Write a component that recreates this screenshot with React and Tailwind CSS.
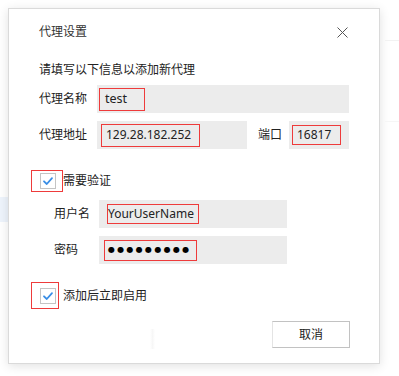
import React from "react";

const font = { fontFamily: '"Noto Sans", "Noto Sans CJK SC", sans-serif' };

// Checkbox with the red annotation frame around it
const CheckRow = ({ label, frameW, frameH, top, gap }) => (
  <div className={`flex items-center pl-[22px] ${top}`}>
    <div className={`flex items-center border border-[#ee3b3b] pl-[8px] ${frameW} ${frameH}`}>
      <div className="flex h-[16px] w-[16px] items-center justify-center border border-[#c4c4c4] bg-white">
        <svg width="12" height="12" viewBox="0 0 12 12" fill="none">
          <path d="M2 6.3 L4.8 9 L10 3.2" stroke="#3a8ee6" strokeWidth="1.8" strokeLinecap="round" strokeLinejoin="round" />
        </svg>
      </div>
    </div>
    <span className={`text-[12px] leading-none text-[#222] ${gap}`}>{label}</span>
  </div>
);

export default function App() {
  return (
    <div className="flex h-[376px] w-[399px] overflow-hidden bg-white" style={font}>
      {/* page behind the dialog, left edge */}
      <div className="flex w-[8px] flex-col overflow-hidden">
        <div className="mt-[197px] h-[25px] w-full bg-[#eef4fc]" />
      </div>

      <div className="pt-[8px]">
        <div className="flex h-[356px] w-[372px] flex-col border border-[#dadada] bg-white shadow-[0_2px_10px_rgba(0,0,0,0.12)]">
          {/* title */}
          <div className="mt-[11px] flex h-[24px] items-center justify-between pl-[30px] pr-[31px]">
            <span className="text-[12px] text-[#333]">代理设置</span>
            <svg width="11" height="11" viewBox="0 0 11 11">
              <path d="M0.5 0.5 L10.5 10.5 M10.5 0.5 L0.5 10.5" stroke="#555" strokeWidth="1" />
            </svg>
          </div>

          <div className="mt-[18px] flex h-[16px] items-center pl-[30px] text-[12px] text-[#222]">
            请填写以下信息以添加新代理
          </div>

          {/* name */}
          <div className="mt-[7px] flex h-[28px] items-center pl-[30px]">
            <span className="w-[58px] text-[12px] text-[#222]">代理名称</span>
            <div className="flex h-[28px] w-[252px] items-center bg-[#ececec] pl-[2px]">
              <div className="flex h-[23px] w-[46px] items-center border border-[#ee3b3b] pl-[5px] text-[12.5px] text-[#222]">
                test
              </div>
            </div>
          </div>

          {/* address + port */}
          <div className="mt-[8px] flex h-[28px] items-center pl-[30px]">
            <span className="w-[58px] text-[12px] text-[#222]">代理地址</span>
            <div className="flex h-[28px] w-[150px] items-center bg-[#ececec] pl-[4px]">
              <div className="flex h-[23px] w-[99px] items-center border border-[#ee3b3b] pl-[4px] text-[12px] text-[#222]">
                129.28.182.252
              </div>
            </div>
            <span className="ml-[11px] w-[31px] text-[12px] text-[#222]">端口</span>
            <div className="flex h-[28px] w-[60px] items-center bg-[#ececec] pl-[3px]">
              <div className="flex h-[20px] w-[49px] items-center border border-[#ee3b3b] pl-[4px] text-[12px] text-[#222]">
                16817
              </div>
            </div>
          </div>

          <CheckRow label="需要验证" frameW="w-[32px]" frameH="h-[22px]" top="mt-[21px]" gap="ml-0" />

          {/* username */}
          <div className="mt-[8px] flex h-[28px] items-center pl-[45px]">
            <span className="w-[45px] text-[12px] text-[#222]">用户名</span>
            <div className="flex h-[28px] w-[188px] items-center bg-[#ececec] pl-[8px]">
              <div className="flex h-[20px] w-[92px] items-center overflow-hidden whitespace-nowrap border border-[#ee3b3b] text-[12px] text-[#222]">
                YourUserName
              </div>
            </div>
          </div>

          {/* password */}
          <div className="mt-[8px] flex h-[28px] items-center pl-[45px]">
            <span className="w-[45px] text-[12px] text-[#222]">密码</span>
            <div className="flex h-[28px] w-[188px] items-center bg-[#ececec] pl-[5px]">
              <div
                className="flex h-[21px] w-[93px] items-center border border-[#ee3b3b] pl-[3px] text-[8px] tracking-[2.3px] text-black"
                style={{ fontFamily: '"DejaVu Sans", sans-serif' }}
              >
                ●●●●●●●●●
              </div>
            </div>
          </div>

          <CheckRow label="添加后立即启用" frameW="w-[28px]" frameH="h-[27px]" top="mt-[18px]" gap="ml-[4px]" />

          {/* footer */}
          <div className="mt-[12px] flex h-[27px] items-center pr-[29px]">
            <div className="ml-[141px] mt-[8px] h-[20px] w-[5px] bg-gradient-to-r from-transparent via-[#f7f7f7] to-transparent" />
            <button className="ml-auto flex h-[27px] w-[78px] items-center justify-center border border-[#c2c2c2] border-l-[#e4e4e4] bg-white text-[12px] text-[#222]">
              取消
            </button>
          </div>
        </div>
      </div>

      {/* page behind the dialog, right edge */}
      <div className="ml-[5px] flex flex-1 flex-col">
        <div className="mt-[40px] h-px w-full bg-[#f2f2f2]" />
        <div className="mt-[80px] h-px w-full bg-[#f6f6f6]" />
      </div>
    </div>
  );
}
